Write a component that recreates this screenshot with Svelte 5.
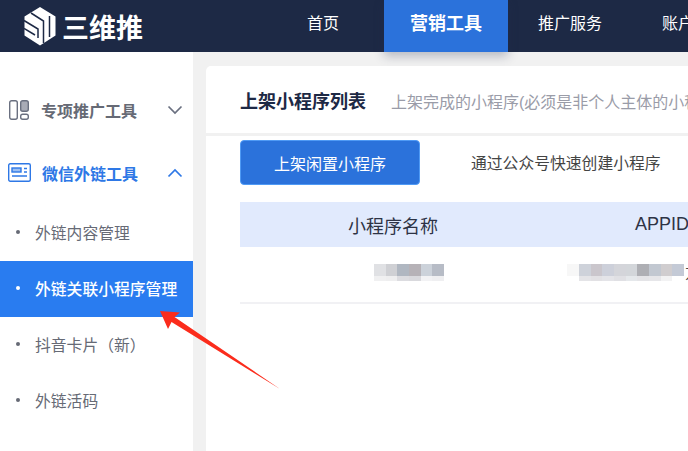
<script>
	const nav = ['首页', '营销工具', '推广服务', '账户'];
	const subItems = ['外链内容管理', '外链关联小程序管理', '抖音卡片（新）', '外链活码'];
	const nameBlur = [
		['#e0e1e4', '#cfd0d4', '#b0b7c1', '#b6b2b7', '#ccd2da', '#b7bcc6'],
		['#f0f0f1', '#eeeeef', '#dcdce0', '#d9d9dd', '#f2f2f4', '#efeff1']
	];
	const appidBlur = [
		['#f7f7f7', '#ced2da', '#cac6cc', '#cdd0da', '#d4d5da', '#d3d6da', '#aeafb4', '#c2c8d1', '#d0cdcf', '#c4cad6'],
		['#ffffff', '#e4e4e7', '#e2e1e4', '#e4e4e8', '#e0e0e4', '#e5e8eb', '#e4e4e7', '#e6e6e9', '#f2f2f3', '#ffffff']
	];
</script>

<div class="page">
	<header>
		<div class="logo">
			<svg width="32" height="39" viewBox="0 0 32 39">
				<path d="M16 0 L31.5 9.5 V28.5 L16 38.5 L0.5 28.5 V9.5 Z" fill="#fff" />
				<g fill="none" stroke="#1d2945" stroke-width="1.5">
					<path d="M0 13.5 L14 22 V31" />
					<path d="M0 21.5 L11 28" />
					<path d="M7 6 L19.5 14 V36" />
					<path d="M25.5 9 V30" />
				</g>
			</svg>
			<span>三维推</span>
		</div>
		<nav>
			{#each nav as item, i}
				<div class="tab" class:active={i === 1}>{item}</div>
			{/each}
		</nav>
	</header>

	<div class="body">
		<aside>
			<div class="group first">
				<svg width="20" height="20" viewBox="0 0 20 20" fill="none" stroke="#6a7080" stroke-width="1.4">
					<rect x="0.7" y="0.7" width="7.6" height="18.6" rx="2" />
					<rect x="11.7" y="0.7" width="7.6" height="10.6" rx="2" fill="#a8abb6" />
					<rect x="11.7" y="14.2" width="7.6" height="5.1" rx="2" />
				</svg>
				<span>专项推广工具</span>
				<svg class="chev" width="16" height="10" viewBox="0 0 16 10" fill="none" stroke="#6a7080" stroke-width="1.7"><path d="M1.5 1.5 L8 8 L14.5 1.5" /></svg>
			</div>
			<div class="group open">
				<svg width="23" height="19" viewBox="0 0 23 19" fill="none" stroke="#2e78e6" stroke-width="1.4">
					<rect x="0.7" y="0.7" width="21.6" height="17.6" rx="1.5" />
					<rect x="4" y="5" width="9" height="4" fill="#9dc0f2" />
					<path d="M4 13 H19 M16 5.5 H19 M16 9 H19" />
				</svg>
				<span>微信外链工具</span>
				<svg class="chev" width="16" height="10" viewBox="0 0 16 10" fill="none" stroke="#2e78e6" stroke-width="1.7"><path d="M1.5 8.5 L8 2 L14.5 8.5" /></svg>
			</div>
			<ul>
				{#each subItems as item, i}
					<li class:current={i === 1}><i></i>{item}</li>
				{/each}
			</ul>
		</aside>

		<main>
			<div class="title">
				<h1>上架小程序列表</h1>
				<p>上架完成的小程序(必须是非个人主体的小程序)</p>
			</div>
			<div class="inner">
				<div class="actions">
					<button class="primary">上架闲置小程序</button>
					<button class="plain">通过公众号快速创建小程序</button>
				</div>
				<div class="thead">
					<div class="col-name">小程序名称</div>
					<div class="col-appid">APPID</div>
				</div>
				<div class="row">
					<div class="mosaic name-blur">
						{#each nameBlur as line}
							<div class="strip">
								{#each line as c}<b style="background:{c}"></b>{/each}
							</div>
						{/each}
					</div>
					<div class="mosaic appid-blur">
						{#each appidBlur as line}
							<div class="strip">
								{#each line as c}<b style="background:{c}"></b>{/each}
							</div>
						{/each}
					</div>
					<span class="tail">方</span>
				</div>
			</div>
		</main>
	</div>

	<svg class="arrow" width="688" height="451" viewBox="0 0 688 451">
		<path d="M160 311 L180 312.5 L174.5 317 L280 389 L171.5 322 L168 329 Z" fill="#fb2c1c" />
	</svg>
</div>

<style>
	:global(body) {
		margin: 0;
		background: #f1f1f1;
	}

	.page {
		position: relative;
		width: 688px;
		height: 451px;
		overflow: hidden;
		font-family: "Liberation Sans", "Noto Sans CJK SC", sans-serif;
	}

	header {
		height: 52px;
		background: #1d2945;
		display: flex;
	}

	.logo {
		width: 384px;
		flex: none;
		display: flex;
		align-items: center;
		padding-left: 24px;
		box-sizing: border-box;
		color: #fff;
		font-size: 27px;
		font-weight: 700;
	}

	.logo span {
		margin-left: 6px;
	}

	nav {
		display: flex;
		margin-left: -107px;
	}

	.tab {
		width: 124px;
		height: 52px;
		line-height: 48px;
		text-align: center;
		color: #fff;
		font-size: 16px;
	}

	.tab:first-child {
		width: 107px;
		text-align: left;
		padding-left: 30px;
		box-sizing: border-box;
	}

	.tab.active {
		background: #2b72db;
		font-size: 18px;
		font-weight: 700;
		box-shadow: 0 4px 10px rgba(40, 50, 80, 0.3);
	}

	.tab:nth-child(3) {
		width: 154px;
		text-align: center;
		padding-right: 30px;
		box-sizing: border-box;
		white-space: nowrap;
	}

	.tab:nth-child(4) {
		width: auto;
		white-space: nowrap;
	}

	.body {
		display: flex;
		height: 399px;
	}

	aside {
		width: 193px;
		flex: none;
		background: #fff;
		color: #666a75;
	}

	.group {
		display: flex;
		align-items: center;
		height: 63px;
		padding-left: 9px;
		font-size: 16px;
		font-weight: 700;
		position: relative;
	}

	.group.first {
		margin-top: 26px;
	}

	.group.first span {
		margin-left: 12px;
	}

	.group.open {
		padding-left: 8px;
		color: #2e78e6;
	}

	.group.open span {
		margin-left: 11px;
	}

	.chev {
		position: absolute;
		left: 167px;
		top: 27px;
	}

	ul {
		list-style: none;
		margin: 1px 0 0;
		padding: 0;
	}

	li {
		height: 56px;
		box-sizing: border-box;
		padding-bottom: 2px;
		display: flex;
		align-items: center;
		padding-left: 16px;
		font-size: 15.8px;
		white-space: nowrap;
	}

	li i {
		width: 4px;
		height: 4px;
		border-radius: 50%;
		background: #666a75;
		margin-right: 15px;
		flex: none;
	}

	li.current {
		background: #297cf0;
		color: #fff;
		font-weight: 500;
	}

	li.current i {
		background: #fff;
	}

	main {
		margin: 14px 0 0 13px;
		flex: 1;
		min-width: 0;
		background: #fff;
		border-radius: 5px 0 0 0;
		overflow: hidden;
	}

	.title {
		height: 67px;
		border-bottom: 3px solid #f1f1f1;
		display: flex;
		align-items: center;
		padding-left: 34px;
		white-space: nowrap;
	}

	h1 {
		margin: 0;
		font-size: 18px;
		font-weight: 700;
		color: #1d2945;
	}

	.title p {
		margin: 2px 0 0 25px;
		font-size: 16px;
		color: #9a9ca8;
	}

	.inner {
		padding: 4px 0 0 34px;
	}

	.actions {
		display: flex;
		align-items: center;
		gap: 51px;
	}

	button {
		font-family: inherit;
		font-size: 16px;
		border: none;
		white-space: nowrap;
		padding: 0;
		background: none;
	}

	.primary {
		width: 180px;
		height: 45px;
		background: #2b72db;
		color: #fff;
		border: 1px solid #4f9af5;
		border-radius: 4px;
		box-sizing: border-box;
	}

	.plain {
		color: #444;
		font-size: 15.8px;
	}

	.thead {
		margin-top: 17px;
		height: 45px;
		background: #e1eafd;
		display: flex;
		align-items: center;
		font-size: 18px;
		color: #2d3345;
		white-space: nowrap;
	}

	.col-name {
		margin-left: 108px;
		width: 287px;
		flex: none;
	}

	.row {
		border-bottom: 2px solid #f1f1f4;
		box-sizing: border-box;
		height: 57px;
		display: flex;
		align-items: flex-start;
		padding-top: 17px;
		white-space: nowrap;
	}

	.strip {
		display: flex;
	}

	.strip b {
		display: block;
		width: 11.7px;
		height: 12px;
	}

	.strip + .strip b {
		height: 5px;
	}

	.name-blur {
		margin-left: 134px;
	}

	.appid-blur {
		margin-left: 123px;
	}

	.tail {
		font-size: 15px;
		color: #444;
		line-height: 17px;
		margin-left: 1px;
	}

	.arrow {
		position: absolute;
		left: 0;
		top: 0;
		pointer-events: none;
	}
</style>
